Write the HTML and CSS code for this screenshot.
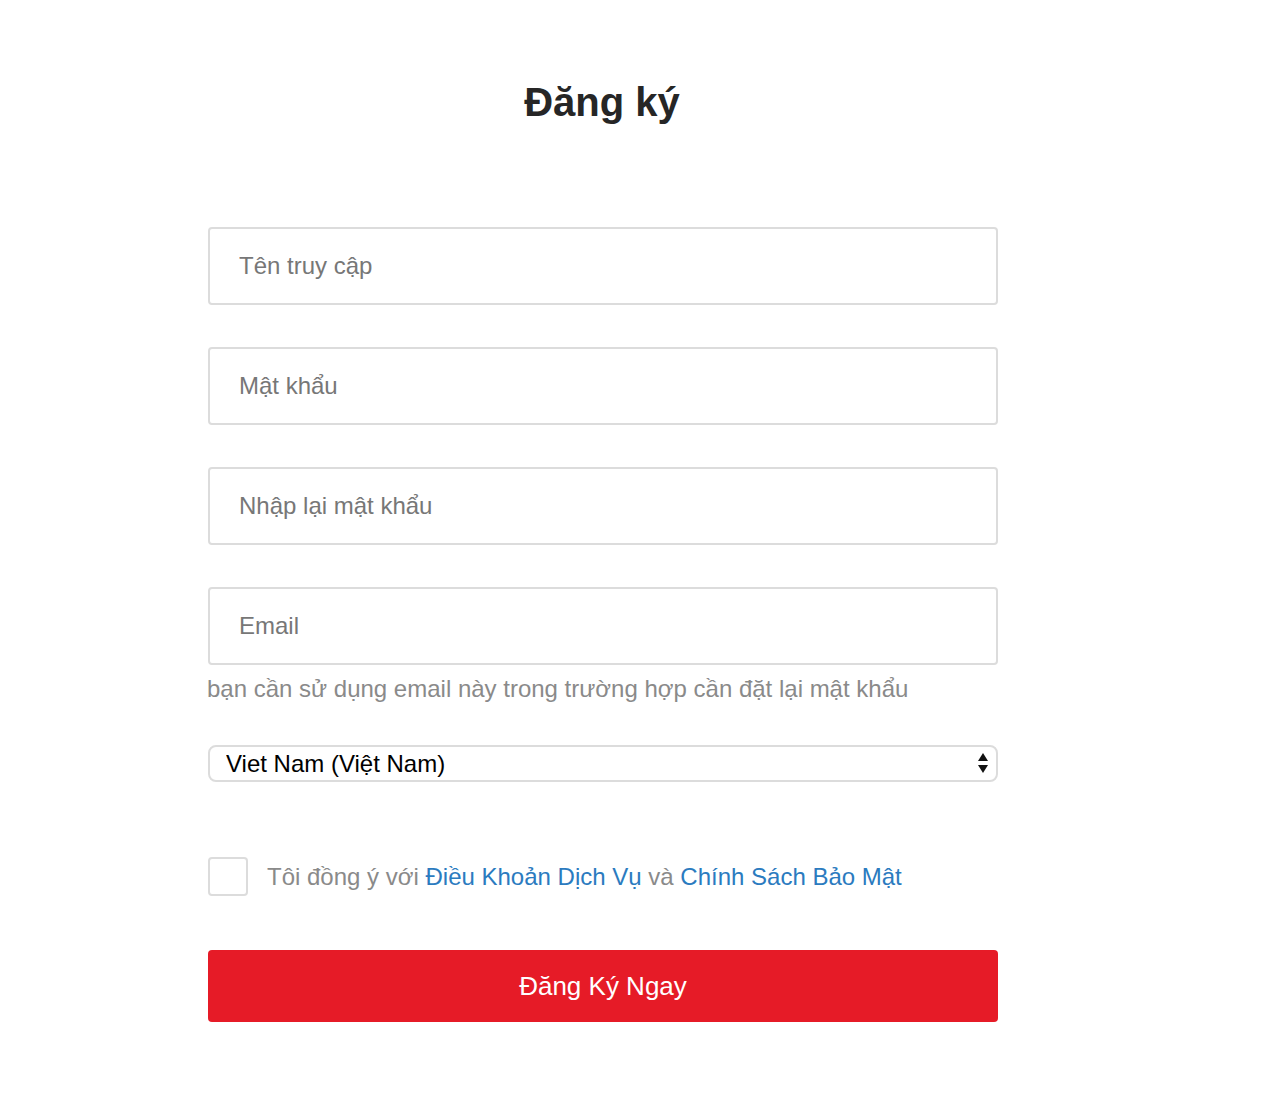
FILE: index.html
```html
<!DOCTYPE html>
<html lang="vi">

<head>
    <meta charset="UTF-8">
    <meta name="viewport" content="width=device-width, initial-scale=1.0">
    <title>Đăng ký</title>
    <link rel="stylesheet" href="styles.css">
</head>

<body>
    <div class="register-page">
        <h1 class="register-title">Đăng ký</h1>

        <form class="register-form">
            <input class="text-field" type="text" placeholder="Tên truy cập">
            <input class="text-field" type="password" placeholder="Mật khẩu">
            <input class="text-field" type="password" placeholder="Nhập lại mật khẩu">

            <div class="email-group">
                <input class="text-field" type="email" placeholder="Email">
                <p class="field-hint">bạn cần sử dụng email này trong trường hợp cần đặt lại mật khẩu</p>
            </div>

            <div class="select-wrap">
                <select class="country-select">
                    <option>Viet Nam (Việt Nam)</option>
                </select>
                <svg class="select-arrows" width="12" height="22" viewBox="0 0 12 22">
                    <polygon points="6,1 11,9 1,9" fill="#111" />
                    <polygon points="1,13 11,13 6,21" fill="#111" />
                </svg>
            </div>

            <label class="agree-row">
                <input class="agree-box" type="checkbox">
                <span class="agree-text">Tôi đồng ý với <a href="#">Điều Khoản Dịch Vụ</a> và <a href="#">Chính Sách Bảo Mật</a></span>
            </label>

            <button class="submit-button" type="button">Đăng Ký Ngay</button>
        </form>
    </div>
</body>

</html>
```

FILE: styles.css
```css
body {
    margin: 8px;
    background-color: #fff;
    font-family: "Liberation Sans", Arial, sans-serif;
}

.register-page {
    width: 790px;
    margin-left: 200px;
    padding-top: 71px;
}

.register-title {
    margin: 0 0 0 -2px;
    font-size: 40px;
    line-height: 46px;
    font-weight: bold;
    color: #262626;
    text-align: center;
}

.register-form {
    display: flex;
    flex-direction: column;
    gap: 42px;
    margin-top: 102px;
}

.text-field {
    box-sizing: border-box;
    width: 100%;
    height: 78px;
    margin: 0;
    padding: 0 29px;
    border: 2px solid #dcdcdc;
    border-radius: 4px;
    font-family: "Liberation Sans", Arial, sans-serif;
    font-size: 24px;
    color: #333;
    outline: none;
}

.text-field::placeholder {
    color: #777;
}

.field-hint {
    margin: 10px 0 0 -1px;
    font-size: 24px;
    line-height: 28px;
    color: #8a8a8a;
}

.select-wrap {
    position: relative;
}

.country-select {
    box-sizing: border-box;
    width: 100%;
    height: 37px;
    margin: 0;
    padding: 0 16px;
    border: 2px solid #dcdcdc;
    border-radius: 8px;
    background-color: #fff;
    font-family: "Liberation Sans", Arial, sans-serif;
    font-size: 24px;
    color: #000;
    appearance: none;
    -webkit-appearance: none;
    outline: none;
}

.select-arrows {
    position: absolute;
    top: 7px;
    right: 9px;
    pointer-events: none;
}

.agree-row {
    display: flex;
    align-items: center;
    gap: 19px;
    margin-top: 33px;
    cursor: pointer;
}

.agree-box {
    box-sizing: border-box;
    width: 40px;
    height: 39px;
    margin: 0;
    border: 2px solid #dcdcdc;
    border-radius: 4px;
    background-color: #fff;
    appearance: none;
    -webkit-appearance: none;
}

.agree-text {
    font-size: 24px;
    line-height: 28px;
    color: #8a8a8a;
}

.agree-text a {
    color: #2b7bbf;
    text-decoration: none;
}

.submit-button {
    height: 72px;
    margin-top: 12px;
    border: none;
    border-radius: 4px;
    background-color: #e61b27;
    color: #fff;
    font-family: "Liberation Sans", Arial, sans-serif;
    font-size: 26px;
    cursor: pointer;
}
```
